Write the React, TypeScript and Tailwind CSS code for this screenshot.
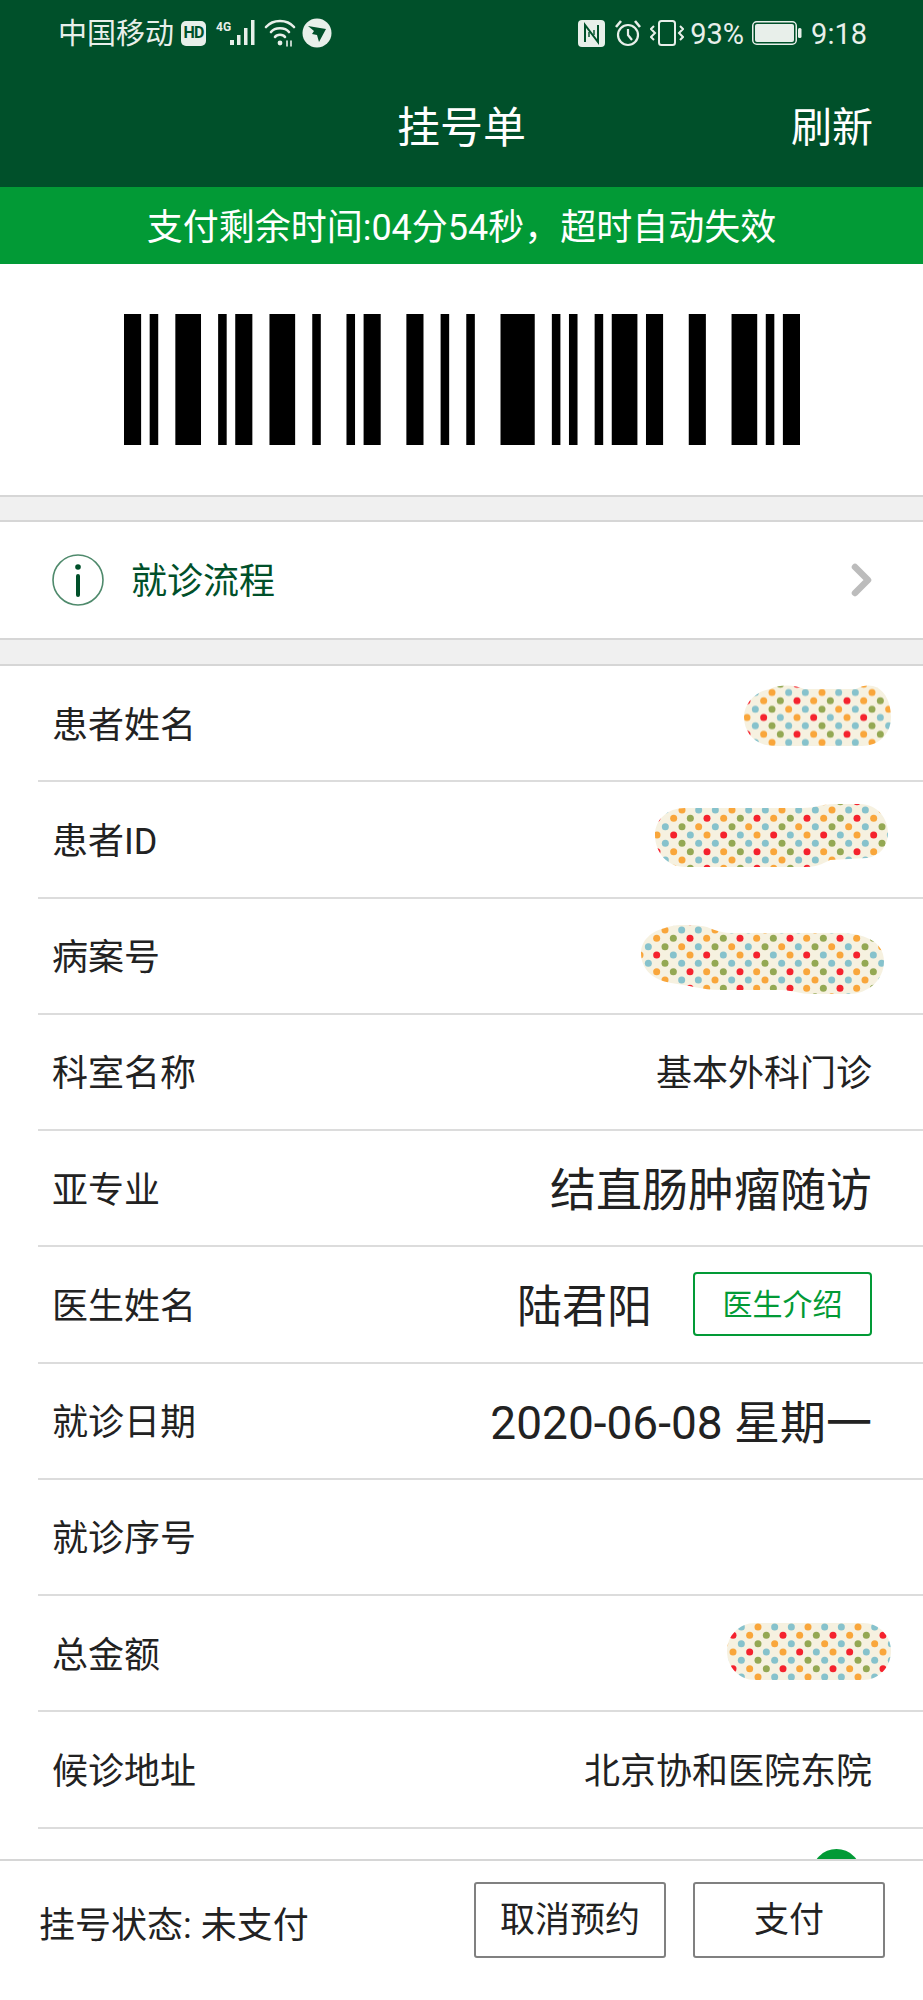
const font = "font-['Roboto','Noto_Sans_CJK_SC',sans-serif]";

// module widths of the barcode, bar then gap alternating
const barcode = [2, 1, 1, 2, 3, 2, 1, 1, 2, 2, 3, 2, 1, 3, 1, 1, 2, 3, 2, 2, 1, 2, 1, 3, 4, 2, 1, 1, 1, 2, 1, 1, 3, 1, 2, 3, 2, 3, 3, 1, 1, 1, 2];

function Barcode() {
  let x = 0;
  const rects: { x: number; w: number }[] = [];
  barcode.forEach((w, i) => {
    if (i % 2 === 0) rects.push({ x, w });
    x += w;
  });
  return (
    <svg width="676" height="131" viewBox={`0 0 ${x} 131`} preserveAspectRatio="none">
      {rects.map((r) => (
        <rect key={r.x} x={r.x} y="0" width={r.w} height="131" fill="#000" />
      ))}
    </svg>
  );
}

const T = "#86c2cc";
const O = "#f9a63b";
const G = "#94a853";
const R = "#f5222d";
const dotRows = [
  [T, O, T],
  [R, O, G],
  [T, G, O],
  [O, R, T],
  [T, G, T],
  [R, O, G],
];

function Pill({ id, w, h, d, px, py }: { id: string; w: number; h: number; d: string; px: number; py: number }) {
  return (
    <svg width={w} height={h} viewBox={`0 0 ${w} ${h}`} className="shrink-0 block">
      <defs>
        <pattern id={id} width="50" height="50" patternUnits="userSpaceOnUse" patternTransform={`translate(${px} ${py})`}>
          <rect width="50" height="50" fill="#f6f1e0" />
          {dotRows.map((row, ry) =>
            row.map((c, i) => (
              <circle key={`${ry}-${i}`} cx={(ry % 2 === 0 ? 8.33 : 0) + 16.67 * i + 4} cy={ry * 8.33 + 4} r="3.5" fill={c} />
            ))
          )}
        </pattern>
      </defs>
      <path d={d} fill={`url(#${id})`} />
    </svg>
  );
}

function Row({ label, children }: { label: string; children?: React.ReactNode }) {
  return (
    <div className="ml-[38px] h-[116.25px] flex items-center justify-between pl-[14px] pr-[51px] border-b-2 border-[#dcdcdc] text-[36px] text-[#222]">
      <span className="pt-[5px]">{label}</span>
      {children}
    </div>
  );
}

function StatusBar() {
  const c = "#e8efea";
  return (
    <div className="h-[66px] flex items-center pl-[58px] pr-[56px] text-[29px] text-[#e8efea] leading-none">
      <span className="pt-[2px]">中国移动</span>
      <span className="ml-[7px] w-[25px] h-[25px] rounded-[5px] bg-[#e8efea] text-[#00502a] text-[16px] font-bold flex items-center justify-center tracking-tighter">HD</span>
      <svg width="44" height="28" viewBox="0 0 44 28" className="ml-[9px]">
        <text x="1" y="12" fontSize="12" fontWeight="700" fill={c} fontFamily="Roboto">4G</text>
        <rect x="15" y="21" width="4" height="5" fill={c} />
        <rect x="22" y="16" width="3.5" height="10" fill={c} />
        <rect x="29" y="9" width="3.5" height="17" fill={c} />
        <rect x="36" y="1" width="3.5" height="25" fill={c} />
      </svg>
      <svg width="32" height="28" viewBox="0 0 32 28" className="ml-[5px]" fill="none" stroke={c} strokeWidth="2.6" strokeLinecap="round">
        <path d="M2 8 C9 0 23 0 30 8" />
        <path d="M7 13 C11 8 21 8 25 13" />
        <path d="M11 18 C13 15 19 15 21 18" />
        <circle cx="16" cy="24" r="2.4" fill={c} stroke="none" />
        <path d="M23 22 L23 27 M27 22 L27 27" strokeWidth="1.6" />
      </svg>
      <svg width="30" height="30" viewBox="0 0 30 30" className="ml-[6px]">
        <circle cx="15" cy="15" r="14.5" fill={c} />
        <path d="M6 8 L24 11 L17 24 L15 17 L10 16 L12 13 Z" fill="#00502a" />
      </svg>
      <div className="flex-1" />
      <svg width="27" height="27" viewBox="0 0 27 27">
        <rect width="27" height="27" rx="4" fill={c} />
        <path d="M7 22 V5 L20 22 V5" fill="none" stroke="#00502a" strokeWidth="2" />
        <path d="M11 17 V12 M16 15 V10" fill="none" stroke="#00502a" strokeWidth="1.4" />
      </svg>
      <svg width="28" height="28" viewBox="0 0 28 28" className="ml-[9px]" fill="none" stroke={c} strokeWidth="2.2">
        <circle cx="14" cy="16" r="10" />
        <path d="M14 10 V16 L18 21" />
        <path d="M2 8 L7 2 M26 8 L21 2" strokeWidth="2.6" />
      </svg>
      <svg width="34" height="26" viewBox="0 0 34 26" className="ml-[8px]" fill="none" stroke={c} strokeWidth="2">
        <rect x="9" y="1" width="16" height="24" rx="2.5" />
        <path d="M4 6 L1 9 L5 13 L1 17 L4 20 M30 6 L33 9 L29 13 L33 17 L30 20" />
      </svg>
      <span className="ml-[6px] pt-[2px]">93%</span>
      <svg width="50" height="24" viewBox="0 0 50 24" className="ml-[8px]">
        <rect x="0.75" y="0.75" width="43.5" height="22.5" rx="4" fill="none" stroke={c} strokeWidth="1.5" />
        <rect x="3" y="3" width="39" height="18" rx="2" fill={c} />
        <rect x="46" y="7" width="3.5" height="10" rx="1.5" fill={c} />
      </svg>
      <span className="ml-[9px] pt-[2px]">9:18</span>
    </div>
  );
}

export default function App() {
  return (
    <div className={`${font} w-[923px] h-[2000px] flex flex-col overflow-hidden bg-white`}>
      <div className="bg-[#00502a] text-white shrink-0">
        <StatusBar />
        <div className="relative h-[121px] flex items-center justify-center pt-[4px]">
          <span className="text-[43px]">挂号单</span>
          <span className="absolute right-[50px] text-[41px]">刷新</span>
        </div>
      </div>
      <div className="h-[77px] shrink-0 bg-[#029a36] text-white text-[36px] flex items-center justify-center pt-[4px]">
        支付剩余时间:04分54秒，超时自动失效
      </div>

      <div className="flex-1 overflow-hidden">
        <div className="h-[231px] flex items-start justify-center pt-[50px]">
          <Barcode />
        </div>
        <div className="h-[27px] bg-[#f0f0f0] border-y-2 border-[#d6d6d6]" />
        <div className="h-[116px] flex items-center pl-[52px] pr-[50px]">
          <svg width="52" height="52" viewBox="0 0 52 52" fill="none">
            <circle cx="26" cy="26" r="25" stroke="#4f8a6c" strokeWidth="1.6" />
            <circle cx="26" cy="13" r="2.8" fill="#00502a" />
            <rect x="24" y="20" width="4" height="23" rx="2" fill="#00502a" />
          </svg>
          <span className="ml-[27px] pt-[4px] text-[36px] text-[#00502a]">就诊流程</span>
          <div className="flex-1" />
          <svg width="22" height="34" viewBox="0 0 22 34" fill="none">
            <path d="M4 4 L17 17 L4 30" stroke="#bcbcbc" strokeWidth="6.5" strokeLinecap="round" strokeLinejoin="round" />
          </svg>
        </div>
        <div className="h-[28px] bg-[#f0f0f0] border-y-2 border-[#d6d6d6]" />

        <Row label="患者姓名">
          <div className="-mr-[19px] mb-[15px]">
            <Pill id="p1" w={147} h={61} px={-1} py={3.5} d="M26 4 C36 -1 52 0 60 4 L112 4 C118 0 125 0 129 1 C141 4 147 18 147 32 C147 50 134 61 118 61 L30 61 C12 61 0 48 0 32 C0 18 12 6 26 4 Z" />
          </div>
        </Row>
        <Row label="患者ID">
          <div className="-mr-[16px] mb-[7px]">
            <Pill id="p2" w={233} h={63} px={-2} py={2} d="M30 4 L148 4 C160 4 166 0 180 0 L205 0 C222 0 233 14 233 29 C233 42 225 52 212 54 L175 56 C170 58 165 63 150 63 L30 63 C12 63 0 48 0 31 C0 16 12 4 30 4 Z" />
          </div>
        </Row>
        <Row label="病案号">
          <div className="-mr-[12px] mt-[7px]">
            <Pill id="p3" w={243} h={69} px={-5} py={1} d="M24 3 C34 -1 52 -1 66 2 C76 6 82 8 92 8 L198 8 C222 8 243 16 243 36 C243 56 226 69 208 69 L170 69 C160 69 150 65 140 65 L80 65 C60 65 48 60 30 58 C12 55 0 44 0 28 C0 16 10 6 24 3 Z" />
          </div>
        </Row>
        <Row label="科室名称">
          <span className="pt-[5px]">基本外科门诊</span>
        </Row>
        <Row label="亚专业">
          <span className="text-[46px] pt-[5px]">结直肠肿瘤随访</span>
        </Row>
        <Row label="医生姓名">
          <div className="flex items-center">
            <span className="text-[45px] pt-[6px]">陆君阳</span>
            <button className="ml-[41px] w-[179px] h-[64px] border-2 border-[#029a36] rounded-[4px] text-[#029a36] text-[30px] flex items-center justify-center">
              医生介绍
            </button>
          </div>
        </Row>
        <Row label="就诊日期">
          <span className="text-[46px] pt-[5px]">2020-06-08 星期一</span>
        </Row>
        <Row label="就诊序号" />
        <Row label="总金额">
          <div className="-mr-[19px] mb-[3px]">
            <Pill id="p4" w={164} h={57} px={2} py={0} d="M28 0 L136 0 C152 0 164 13 164 28 C164 44 152 57 136 57 L28 57 C12 57 0 44 0 28 C0 13 12 0 28 0 Z" />
          </div>
        </Row>
        <Row label="候诊地址">
          <span className="pt-[5px]">北京协和医院东院</span>
        </Row>
        <div className="flex justify-end pr-[62px] pt-[20px]">
          <div className="w-[49px] h-[49px] rounded-full bg-[#029a36]" />
        </div>
      </div>

      <div className="h-[141px] shrink-0 bg-white border-t-2 border-[#d6d6d6] flex items-center justify-between pl-[39px] pr-[38px] pb-[22px] text-[#222] text-[35px]">
        <span className="text-[36px] pt-[12px]">挂号状态: 未支付</span>
        <div className="flex gap-[27px]">
          <button className="w-[192px] h-[76px] pt-[3px] border-2 border-[#808080] rounded-[3px] flex items-center justify-center">取消预约</button>
          <button className="w-[192px] h-[76px] pt-[3px] border-2 border-[#808080] rounded-[3px] flex items-center justify-center">支付</button>
        </div>
      </div>
    </div>
  );
}
